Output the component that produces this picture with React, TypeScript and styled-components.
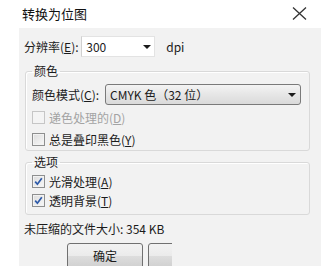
import React from 'react';
import styled, { createGlobalStyle } from 'styled-components';

const GlobalStyle = createGlobalStyle`
  html, body {
    margin: 0;
    padding: 0;
    background: #ffffff;
  }
  body {
    font-family: "Noto Sans CJK SC", "Noto Sans", sans-serif;
    font-size: 12px;
    color: #1b1b1b;
  }
  * {
    box-sizing: border-box;
  }
`;

const Dialog = styled.div`
  width: 321px;
  height: 266px;
  overflow: hidden;
  background: #ffffff;
  display: flex;
  flex-direction: column;
`;

const TitleBar = styled.div`
  height: 28px;
  flex: none;
  display: flex;
  align-items: center;
  justify-content: space-between;
  padding: 0 14px 2px 22px;
  font-size: 13px;
  color: #111;
`;

const Panel = styled.div`
  flex: 1;
  margin-left: 19px;
  background: #f2f2f2;
  padding: 8px 11px 0 5px;
  display: flex;
  flex-direction: column;
`;

const Row = styled.div`
  display: flex;
  align-items: center;
  height: 21px;
`;

const Label = styled.span<{ $width?: number }>`
  width: ${p => (p.$width ? `${p.$width}px` : 'auto')};
  flex: none;
  white-space: nowrap;
  line-height: 16px;
  u {
    text-decoration: underline;
    text-underline-offset: 1px;
  }
`;

const NumberBox = styled.div`
  width: 74px;
  height: 21px;
  background: #fff;
  border: 1px solid #e3e3e3;
  border-left-color: #d0d0d0;
  display: flex;
  align-items: center;
  justify-content: space-between;
  padding: 0 3px 0 4px;
  margin-right: 11px;
`;

const Arrow = styled.span`
  width: 0;
  height: 0;
  border-left: 4px solid transparent;
  border-right: 4px solid transparent;
  border-top: 4px solid #1b1b1b;
`;

const Group = styled.fieldset<{ $top: number; $padTop: number; $padBottom: number }>`
  margin: ${p => p.$top}px 0 0 1px;
  padding: ${p => p.$padTop}px 6px ${p => p.$padBottom}px 6px;
  border: 1px solid #d9d9d9;
  border-radius: 3px;
  box-shadow: inset 1px 1px 0 #ffffff;
  min-width: 0;
  legend {
    margin-left: 0;
    padding: 0 2px;
    line-height: 16px;
    font-size: 12px;
  }
`;

const SelectBox = styled.div`
  flex: 1;
  height: 21px;
  margin-right: 2px;
  border: 1px solid #7a7a7a;
  border-radius: 3px;
  background: linear-gradient(#f4f4f4, #e6e6e6 50%, #dadada);
  display: flex;
  align-items: center;
  justify-content: space-between;
  padding: 0 4px 0 4px;
`;

const CheckRow = styled.label<{ $height: number; $disabled?: boolean }>`
  display: flex;
  align-items: center;
  height: ${p => p.$height}px;
  gap: 4px;
  color: ${p => (p.$disabled ? '#a3a3a3' : '#1b1b1b')};
  u {
    text-decoration: underline;
    text-underline-offset: 1px;
  }
`;

const Box = styled.span<{ $disabled?: boolean }>`
  width: 13px;
  height: 13px;
  flex: none;
  border: 1px solid ${p => (p.$disabled ? '#c6c6c6' : '#8e8f8f')};
  background: ${p =>
    p.$disabled ? '#f4f4f4' : 'linear-gradient(135deg, #dcdcdc, #f8f8f8)'};
  box-shadow: inset 0 0 0 1px ${p => (p.$disabled ? '#f4f4f4' : '#f2f2f2')};
  display: flex;
  align-items: center;
  justify-content: center;
`;

const SizeText = styled.div`
  margin-top: 6px;
  line-height: 16px;
  white-space: nowrap;
`;

const Buttons = styled.div`
  display: flex;
  gap: 5px;
  margin-top: 6px;
  padding-left: 43px;
`;

const Button = styled.div<{ $width: number }>`
  width: ${p => p.$width}px;
  height: 26px;
  flex: none;
  border: 1px solid #707070;
  border-radius: 3px;
  background: linear-gradient(#f2f2f2, #ebebeb 50%, #dddddd 51%, #cfcfcf);
  display: flex;
  align-items: center;
  justify-content: center;
  padding-bottom: 2px;
`;

// the second button is cut off by the screenshot edge
const Clip = styled.div`
  width: 24px;
  overflow: hidden;
  flex: none;
`;

const CheckMark = () => (
  <svg width="9" height="9" viewBox="0 0 9 9">
    <path d="M1.2 4.6 L3.4 7.2 L7.8 1.2" fill="none" stroke="#2c59a8" strokeWidth="1.7" />
  </svg>
);

const Check = ({
  label,
  hot,
  checked,
  disabled,
  height,
}: {
  label: string;
  hot: string;
  checked?: boolean;
  disabled?: boolean;
  height: number;
}) => (
  <CheckRow $height={height} $disabled={disabled}>
    <Box $disabled={disabled}>{checked && <CheckMark />}</Box>
    <span>
      {label}(<u>{hot}</u>)
    </span>
  </CheckRow>
);

const App = () => {
  return (
    <Dialog>
      <GlobalStyle />
      <TitleBar>
        <span>转换为位图</span>
        <svg width="15" height="13" viewBox="0 0 15 13">
          <path d="M1 0.5 L14 12.5 M14 0.5 L1 12.5" stroke="#333" strokeWidth="1.3" />
        </svg>
      </TitleBar>
      <Panel>
        <Row>
          <Label>
            分辨率(<u>E</u>):&nbsp;
          </Label>
          <NumberBox>
            <span>300</span>
            <Arrow />
          </NumberBox>
          <span>dpi</span>
        </Row>
        <Group $top={6} $padTop={5} $padBottom={0}>
          <legend>颜色</legend>
          <Row>
            <Label $width={73}>
              颜色模式(<u>C</u>):
            </Label>
            <SelectBox>
              <span>CMYK 色（32 位）</span>
              <Arrow />
            </SelectBox>
          </Row>
          <div style={{ height: 1 }} />
          <Check label="递色处理的" hot="D" disabled height={22} />
          <Check label="总是叠印黑色" hot="Y" height={22} />
        </Group>
        <Group $top={3} $padTop={2} $padBottom={4}>
          <legend>选项</legend>
          <Check label="光滑处理" hot="A" checked height={19} />
          <Check label="透明背景" hot="T" checked height={19} />
        </Group>
        <SizeText>未压缩的文件大小: 354 KB</SizeText>
        <Buttons>
          <Button $width={76}>确定</Button>
          <Clip>
            <Button $width={76} />
          </Clip>
        </Buttons>
      </Panel>
    </Dialog>
  );
};

export default App;
